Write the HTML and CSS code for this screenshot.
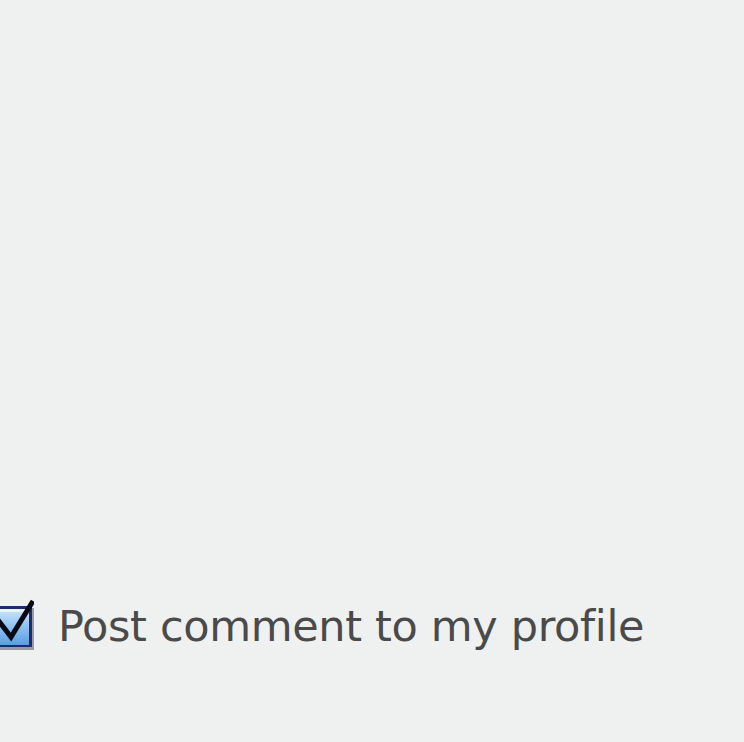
FILE: index.html
```html
<!DOCTYPE html>
<html>
<head>
<meta charset="utf-8">
<link rel="stylesheet" href="styles.css">
</head>
<body>
<div class="page">
  <label class="option">
    <span class="box">
      <svg class="check" width="40" height="56" viewBox="0 0 40 56">
        <defs>
          <linearGradient id="g" x1="0" y1="0" x2="0" y2="1">
            <stop offset="0" stop-color="#cfe5fb"/>
            <stop offset="0.45" stop-color="#94c5f3"/>
            <stop offset="1" stop-color="#5a9ce4"/>
          </linearGradient>
        </defs>
        <rect x="-6" y="12" width="40" height="42" fill="#9a9aa2"/>
        <rect x="-6" y="10" width="38" height="41" fill="#1e2a6a"/>
        <rect x="-3" y="13" width="32" height="36" fill="url(#g)"/>
        <rect x="-3" y="13" width="32" height="3" fill="#e9f3fd"/>
        <path d="M-2 24 L11 41 L33 5" fill="none" stroke="#0a0a14" stroke-width="5" stroke-linejoin="miter"/>
      </svg>
    </span>
    <span class="text">Post comment to my profile</span>
  </label>
</div>
</body>
</html>
```
FILE: styles.css
```css
html, body {
  margin: 0;
  padding: 0;
  background: #eff0f0;
}
.page {
  width: 744px;
  height: 742px;
  box-sizing: border-box;
  padding-top: 596px;
}
.option {
  display: flex;
  align-items: flex-start;
  gap: 24px;
}
.box {
  display: block;
  width: 34px;
  height: 56px;
  overflow: hidden;
}
.check {
  display: block;
}
.text {
  font-family: "DejaVu Sans", Verdana, sans-serif;
  font-size: 43px;
  line-height: 56px;
  color: #4a4a4a;
  letter-spacing: -0.35px;
  margin-top: 2px;
}
```
